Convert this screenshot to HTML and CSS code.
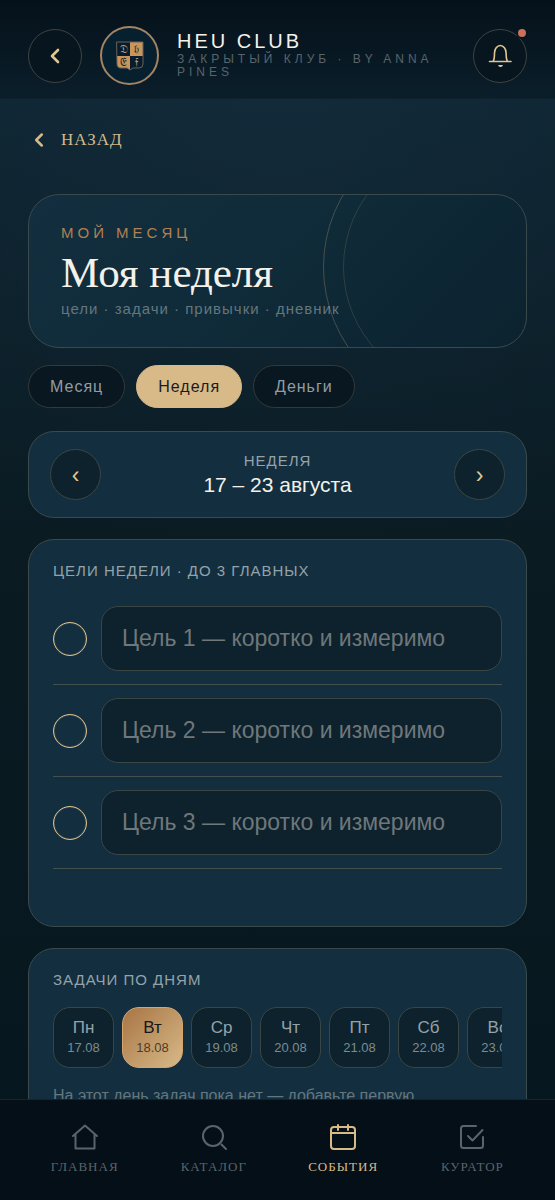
FILE: index.html
```html
<!DOCTYPE html>
<html lang="ru">
<head>
  <meta charset="UTF-8" />
  <meta name="viewport" content="width=device-width, initial-scale=1.0" />
  <title>HEU CLUB — Моя неделя</title>
  <link rel="stylesheet" href="styles.css">
</head>
<body>
  <div class="app">
    <header class="topbar">
      <button class="round-btn" type="button" aria-label="Назад">
        <svg width="24" height="24" viewBox="0 0 24 24"><path d="M15 6l-6 6 6 6" stroke-width="2.6" /></svg>
      </button>
      <div class="crest">
        <svg width="28" height="30" viewBox="0 0 28 30">
          <path class="crest-dark" d="M1 1h26v22q0 4-4 4h-6l-3 2-3-2H5q-4 0-4-4z" />
          <path class="crest-gold" d="M14 1h13v14H14zM1 15h13v14l-3-2H5q-4 0-4-4z" />
          <path class="crest-line" d="M1 1h26v22q0 4-4 4h-6l-3 2-3-2H5q-4 0-4-4z" />
          <g class="crest-text">
            <text class="on-dark" x="7.5" y="12">𝔇</text>
            <text class="on-gold" x="20.5" y="12">𝔥</text>
            <text class="on-gold" x="7.5" y="25">𝔈</text>
            <text class="on-dark" x="20.5" y="25">𝔣</text>
          </g>
        </svg>
      </div>
      <div class="brand">
        <div class="brand-name">HEU CLUB</div>
        <div class="brand-sub">ЗАКРЫТЫЙ КЛУБ · BY ANNA PINES</div>
      </div>
      <button class="round-btn bell" type="button" aria-label="Уведомления">
        <svg width="26" height="26" viewBox="0 0 26 26">
          <path d="M2.5 18.5H24M6 18.5c1.500-2 1.500-4.500 1.500-8.500a5.800 7.500 0 0 1 11.600 0c0 4 0 6.500 1.500 8.500" stroke-width="1.6" />
          <path d="M11.800 22.500q1.700 1.800 3.400 0z" stroke-width="1.2" />
        </svg>
        <span class="dot"></span>
      </button>
    </header>

    <main class="content">
      <a href="#" class="back-link">
        <svg width="22" height="22" viewBox="0 0 24 24"><path d="M15 6l-6 6 6 6" stroke-width="2.8" /></svg>
        НАЗАД
      </a>

      <section class="hero">
        <div class="hero-label">МОЙ МЕСЯЦ</div>
        <h1>Моя неделя</h1>
        <p>цели · задачи · привычки · дневник</p>
      </section>

      <div class="tabs">
        <button class="tab" type="button">Месяц</button>
        <button class="tab active" type="button">Неделя</button>
        <button class="tab" type="button">Деньги</button>
      </div>

      <section class="card week">
        <button class="week-btn" type="button" aria-label="Предыдущая неделя">‹</button>
        <div class="week-text">
          <div class="card-title">НЕДЕЛЯ</div>
          <div class="week-range">17 – 23 августа</div>
        </div>
        <button class="week-btn" type="button" aria-label="Следующая неделя">›</button>
      </section>

      <section class="card goals">
        <h2 class="card-title">ЦЕЛИ НЕДЕЛИ · ДО 3 ГЛАВНЫХ</h2>
        <div class="goal">
          <input class="goal-check" type="checkbox" aria-label="Цель 1 выполнена">
          <input class="goal-input" type="text" aria-label="Цель 1" placeholder="Цель 1 — коротко и измеримо">
        </div>
        <div class="goal">
          <input class="goal-check" type="checkbox" aria-label="Цель 2 выполнена">
          <input class="goal-input" type="text" aria-label="Цель 2" placeholder="Цель 2 — коротко и измеримо">
        </div>
        <div class="goal">
          <input class="goal-check" type="checkbox" aria-label="Цель 3 выполнена">
          <input class="goal-input" type="text" aria-label="Цель 3" placeholder="Цель 3 — коротко и измеримо">
        </div>
      </section>

      <section class="card tasks">
        <h2 class="card-title">ЗАДАЧИ ПО ДНЯМ</h2>
        <div class="days">
          <button class="day" type="button">Пн<small>17.08</small></button>
          <button class="day active" type="button">Вт<small>18.08</small></button>
          <button class="day" type="button">Ср<small>19.08</small></button>
          <button class="day" type="button">Чт<small>20.08</small></button>
          <button class="day" type="button">Пт<small>21.08</small></button>
          <button class="day" type="button">Сб<small>22.08</small></button>
          <button class="day" type="button">Вс<small>23.08</small></button>
        </div>
        <p class="empty">На этот день задач пока нет — добавьте первую.</p>
      </section>
    </main>

    <nav class="bottom-nav">
      <a href="#">
        <svg width="28" height="28" viewBox="0 0 28 28"><path d="M2 13L14 2.500 26 13M4.500 11v14.500h19V11" /></svg>
        ГЛАВНАЯ
      </a>
      <a href="#">
        <svg width="28" height="28" viewBox="0 0 28 28"><circle cx="13" cy="13" r="10" /><path d="M21.500 21.500l4.500 4.500" /></svg>
        КАТАЛОГ
      </a>
      <a href="#" class="active">
        <svg width="28" height="28" viewBox="0 0 28 28"><rect x="2" y="4" width="24" height="22" rx="3" /><path d="M2 10h24M9 2v5M19 2v5" /></svg>
        СОБЫТИЯ
      </a>
      <a href="#">
        <svg width="28" height="28" viewBox="0 0 28 28"><path d="M18 3H5.500Q3 3 3 5.500v17Q3 25 5.500 25h17q2.500 0 2.500-2.500V14M10 13l4.500 4.500L24.500 7" /></svg>
        КУРАТОР
      </a>
    </nav>
  </div>
</body>
</html>
```
FILE: styles.css
```css
* {
  box-sizing: border-box;
}

body {
  margin: 0;
  font-family: "Liberation Sans", Arial, sans-serif;
  background: #07171f;
  color: #f4f1ea;
}

button,
input {
  font-family: inherit;
}

button {
  padding: 0;
  cursor: pointer;
}

a {
  text-decoration: none;
}

svg {
  display: block;
  fill: none;
  stroke: currentColor;
  stroke-linecap: round;
  stroke-linejoin: round;
}

.app {
  display: flex;
  flex-direction: column;
  height: 100vh;
}

/* top bar */
.topbar {
  display: flex;
  align-items: center;
  gap: 18px;
  padding: 26px 28px 13px;
  background: linear-gradient(#05111a, #0a1e2a);
  border-bottom: 1px solid #0d222d;
}

.round-btn {
  display: flex;
  align-items: center;
  justify-content: center;
  flex: none;
  position: relative;
  width: 54px;
  height: 54px;
  border: 1px solid #3f4442;
  border-radius: 50%;
  background: #06151e;
  color: #e3c793;
}

.dot {
  position: absolute;
  top: -3px;
  right: -2px;
  width: 12px;
  height: 12px;
  border: 2px solid #07151e;
  border-radius: 50%;
  background: #cc6f5c;
}

.crest {
  display: flex;
  align-items: center;
  justify-content: center;
  flex: none;
  width: 59px;
  height: 59px;
  border: 2px solid #a58462;
  border-radius: 50%;
  background: #07202f;
}

.crest-dark {
  fill: #0a1c2b;
  stroke: none;
}

.crest-gold {
  fill: #c8955c;
  stroke: none;
}

.crest-line {
  stroke: #6b6158;
}

.crest-text {
  font-family: "DejaVu Sans", "DejaVu Serif", serif;
  font-size: 11px;
  text-anchor: middle;
  stroke: none;
}

.on-dark {
  fill: #b3a08a;
}

.on-gold {
  fill: #1c2026;
}

.brand {
  flex: 1;
  min-width: 0;
  padding-bottom: 4px;
}

.brand-name {
  font-size: 20px;
  line-height: 24px;
  letter-spacing: 3px;
}

.brand-sub {
  font-size: 12px;
  line-height: 13px;
  letter-spacing: 4px;
  color: #58646b;
}

/* page content */
.content {
  flex: 1;
  min-height: 0;
  overflow-y: auto;
  scrollbar-width: none;
  padding: 26px 28px 0;
  background:
    radial-gradient(ellipse 90% 45% at 50% 0, rgba(22, 50, 66, 0.45), transparent),
    linear-gradient(#0f2432, #0a1b22 45%, #07171f);
}

.back-link {
  display: inline-flex;
  align-items: center;
  gap: 11px;
  font-family: "Liberation Serif", "Times New Roman", serif;
  font-size: 17px;
  line-height: 30px;
  letter-spacing: 1px;
  color: #d3b98c;
}

.hero {
  position: relative;
  overflow: hidden;
  margin-top: 39px;
  padding: 28px 32px;
  border: 1px solid #3a4a4c;
  border-radius: 31px;
  background: linear-gradient(135deg, #132f3f, #102c3a 40%, #0c222f);
}

.hero::before,
.hero::after {
  content: "";
  position: absolute;
  border: 1px solid rgba(216, 184, 133, 0.28);
  border-radius: 50%;
}

.hero::before {
  top: -71px;
  right: -83px;
  width: 284px;
  height: 284px;
}

.hero::after {
  top: -51px;
  right: -63px;
  width: 244px;
  height: 244px;
  opacity: 0.6;
}

.hero-label {
  font-size: 15px;
  line-height: 20px;
  letter-spacing: 4px;
  color: #b08155;
}

.hero h1 {
  margin: 6px 0 0;
  font-family: "Liberation Serif", "Times New Roman", serif;
  font-size: 43px;
  font-weight: 400;
  line-height: 48px;
}

.hero p {
  margin: 2px 0 0;
  font-size: 15px;
  line-height: 20px;
  letter-spacing: 1px;
  color: #64767e;
}

.tabs {
  display: flex;
  gap: 11px;
  margin-top: 17px;
}

.tab {
  height: 43px;
  padding: 0 21px;
  border: 1px solid #343a37;
  border-radius: 22px;
  background: #091721;
  color: #929da3;
  font-size: 16px;
  letter-spacing: 1px;
}

.tab.active {
  border-color: #d8b988;
  background: #d8b988;
  color: #1a1c1c;
}

.card {
  margin-top: 21px;
  padding: 21px 24px;
  border: 1px solid #3a4a4c;
  border-radius: 26px;
  background: #132f3f;
}

.card-title {
  margin: 0;
  font-size: 15px;
  font-weight: 400;
  line-height: 20px;
  letter-spacing: 1px;
  color: #94a2a9;
}

.week {
  display: flex;
  align-items: center;
  justify-content: space-between;
  margin-top: 23px;
  padding: 17px 21px;
}

.week-btn {
  width: 51px;
  height: 51px;
  padding-top: 2px;
  border: 1px solid #3a4644;
  border-radius: 50%;
  background: #0d222d;
  color: #e3c793;
  font-size: 23px;
}

.week-text {
  text-align: center;
}

.week-range {
  font-size: 21px;
  line-height: 28px;
}

.goals {
  padding-bottom: 57px;
}

.goals .card-title {
  margin-bottom: 12px;
}

.goal {
  display: flex;
  align-items: center;
  gap: 14px;
  padding: 13px 0;
  border-bottom: 1px solid #42504e;
}

.goal-check {
  appearance: none;
  flex: none;
  width: 34px;
  height: 34px;
  margin: 0;
  border: 1px solid #dcc08f;
  border-radius: 50%;
  box-shadow: inset 0 0 1px #dcc08f;
}

.goal-check:checked {
  background: #d8b988;
}

.goal-input {
  flex: 1;
  min-width: 0;
  height: 65px;
  padding: 0 20px;
  border: 1px solid #3a4644;
  border-radius: 17px;
  background: #0d222d;
  color: #f4f1ea;
  font-size: 23px;
}

.goal-input::placeholder {
  color: #6f777a;
}

.days {
  display: flex;
  gap: 8px;
  margin-top: 17px;
  overflow-x: auto;
  scrollbar-width: none;
}

.day {
  display: flex;
  flex-direction: column;
  align-items: center;
  justify-content: center;
  flex: none;
  width: 61px;
  height: 61px;
  border: 1px solid #3a4644;
  border-radius: 17px;
  background: #0d222d;
  color: #94a2a9;
  font-size: 17px;
  line-height: 20px;
}

.day small {
  font-size: 13px;
  color: #7d8a90;
}

.day.active {
  border-color: #d8a468;
  background: linear-gradient(135deg, #a87545, #d8b988);
  color: #14181a;
}

.day.active small {
  color: #4b3d2c;
}

.empty {
  margin: 18px 0 20px;
  font-size: 16px;
  line-height: 20px;
  color: #64767e;
}

/* bottom navigation */
.bottom-nav {
  display: grid;
  grid-template-columns: repeat(4, 1fr);
  padding: 23px 18px 25px 20px;
  border-top: 1px solid #16242b;
  background: #040f17;
}

.bottom-nav a {
  display: flex;
  flex-direction: column;
  align-items: center;
  gap: 8px;
  font-family: "Liberation Serif", "Times New Roman", serif;
  font-size: 13px;
  line-height: 16px;
  letter-spacing: 1px;
  color: #5a646a;
}

.bottom-nav svg {
  stroke-width: 2;
}

.bottom-nav a.active {
  color: #d8b988;
}
```
